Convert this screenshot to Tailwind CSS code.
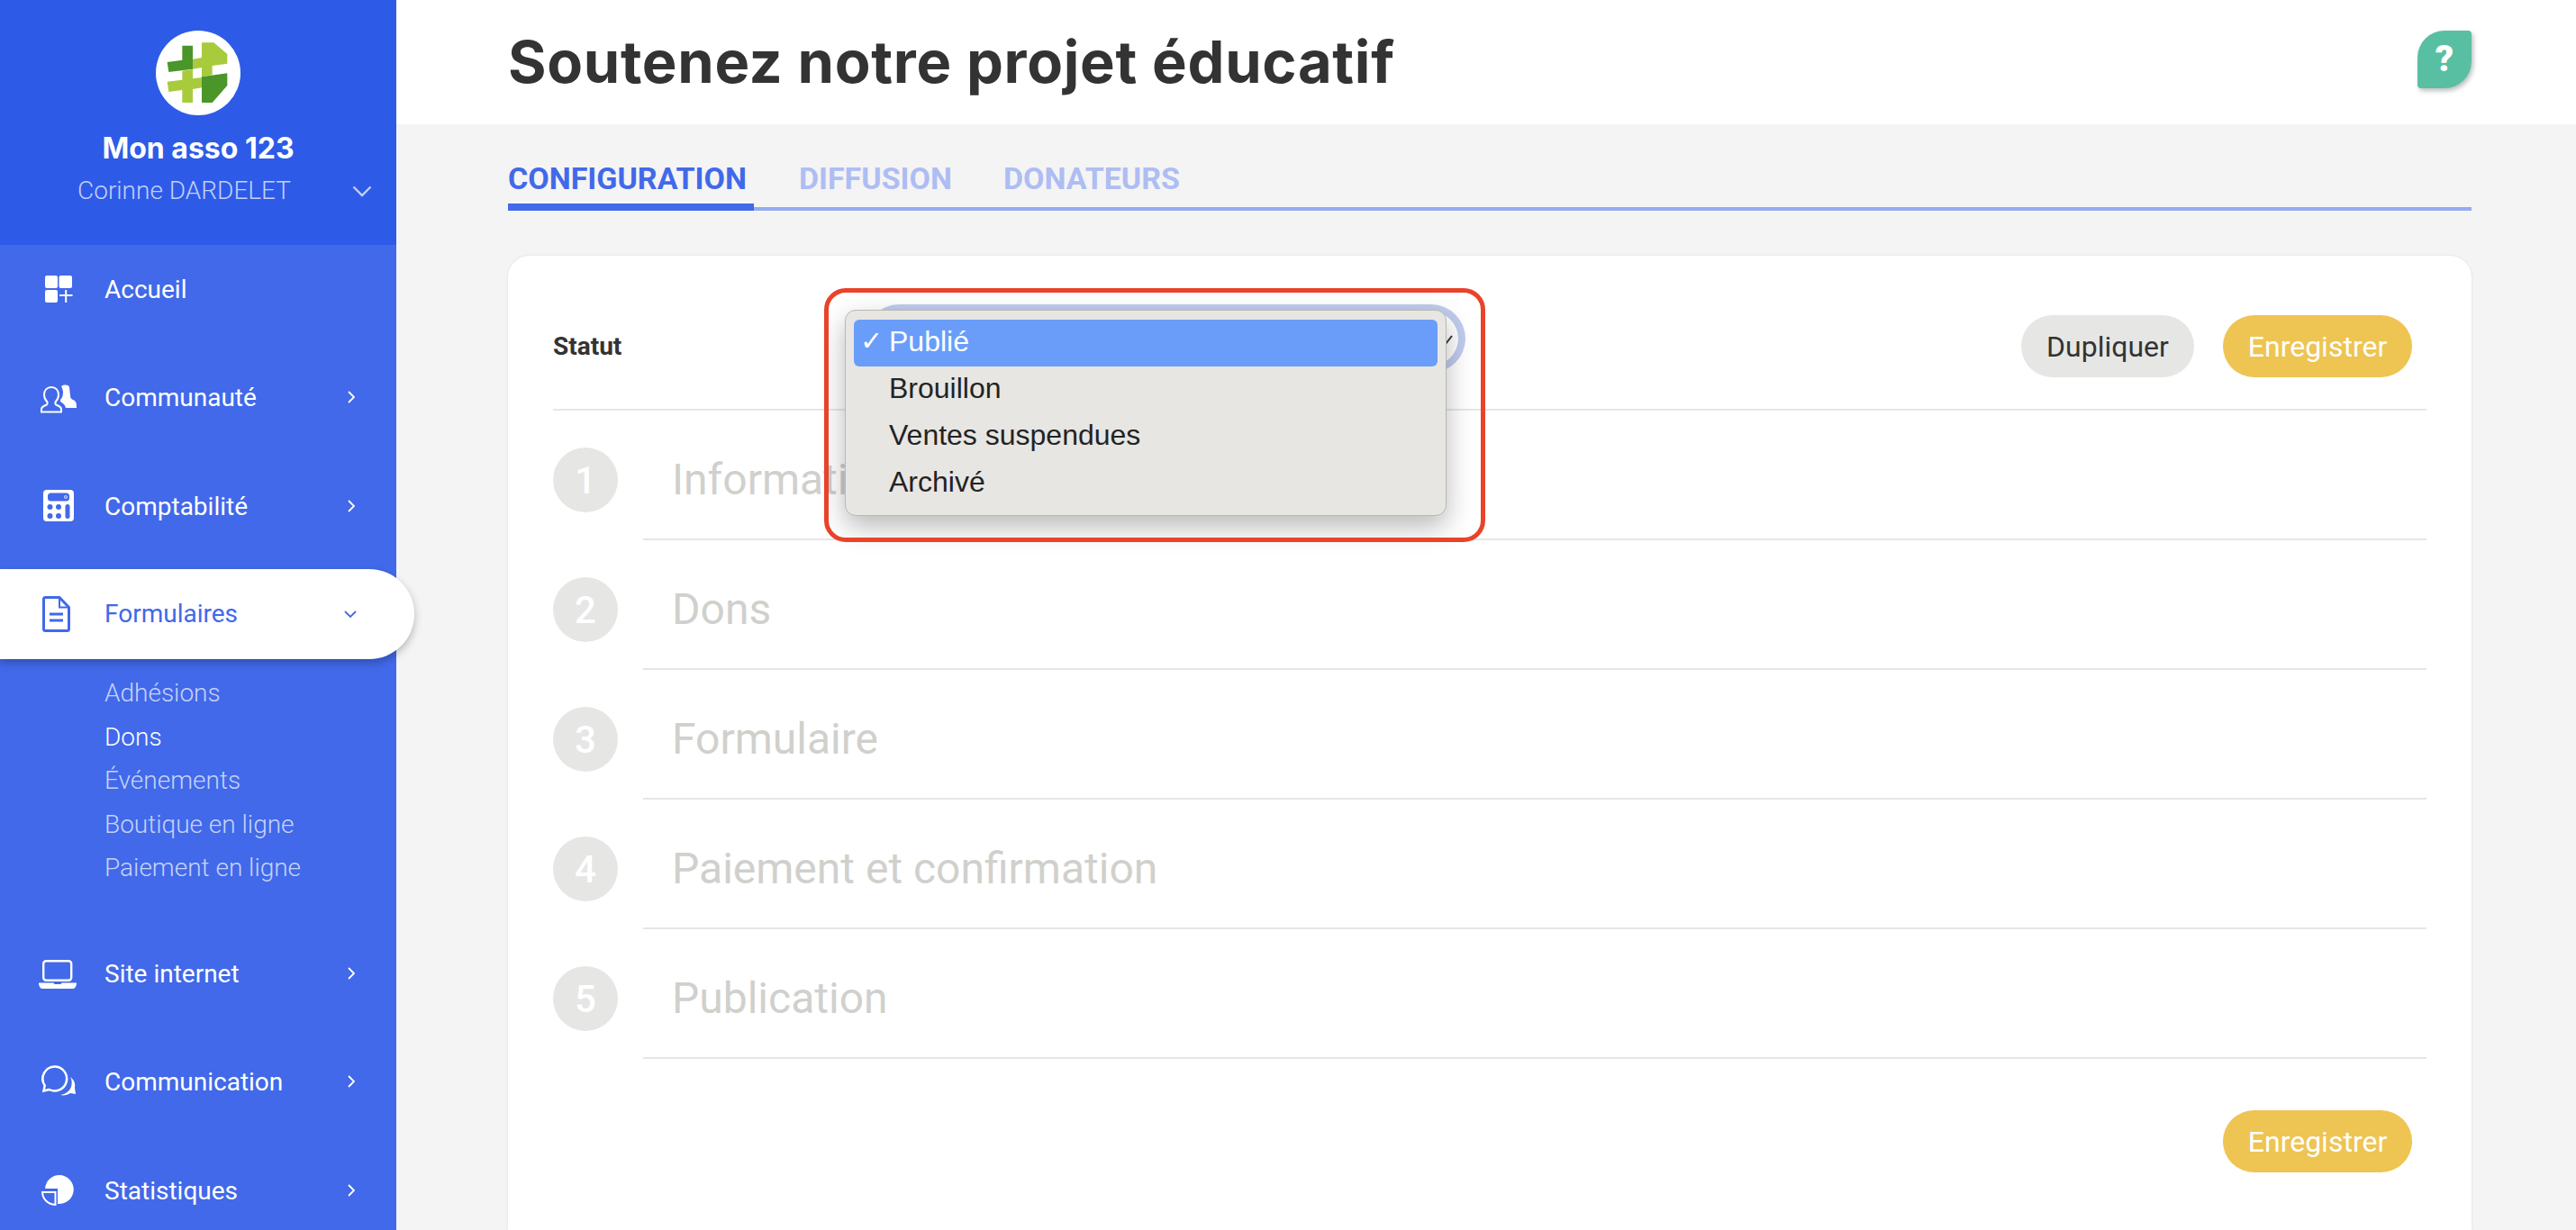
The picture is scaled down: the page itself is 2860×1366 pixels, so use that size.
<!DOCTYPE html>
<html lang="fr">
  <head>
    <meta charset="UTF-8" />
    <title>Soutenez notre projet éducatif</title>
    <script src="https://cdn.jsdelivr.net/npm/@tailwindcss/browser@4"></script>
  </head>
  <body class="flex h-screen overflow-hidden bg-[#f4f4f4] font-[Roboto,sans-serif]">
    <!-- Sidebar -->
    <aside class="w-[440px] shrink-0 bg-[#4169e9] relative z-10">
      <div class="h-[272px] bg-[#2d5be8] flex flex-col items-center pt-[34px]">
        <svg class="w-[94px] h-[94px]" viewBox="519 102 282 282">
          <circle cx="660" cy="243" r="141" fill="#fff" />
          <polygon fill="#4a9628" points="607,152 642,152 642,230 562,240 557,207 607,200" />
          <polygon fill="#a8cb3c" points="642,197 672,192 672,142 712,142 757,180 757,212 707,219 707,250 672,256 672,225 642,230" />
          <polygon fill="#a8cb3c" points="607,236 642,231 642,262 672,258 672,292 642,297 642,342 607,342 607,300 562,306 557,272 607,266" />
          <polygon fill="#4a9628" points="672,256 757,244 757,285 707,342 672,342" />
        </svg>
        <div class="mt-[15px] text-[32px] leading-[44px] font-bold text-white font-[Inter,sans-serif]">Mon asso 123</div>
        <div class="w-full flex items-center mt-[5px] h-[40px]">
          <span class="ml-[86px] text-[28px] font-light text-[#c3cff8]">Corinne DARDELET</span>
          <svg class="ml-auto mr-[27px] w-[22px] h-[13px]" viewBox="0 0 22 13" fill="none" stroke="#c3cff8" stroke-width="2.4"><path d="M1.5 1.5 11 11l9.5-9.5" /></svg>
        </div>
      </div>

      <nav class="flex flex-col -mt-px text-white text-[28px]">
        <a class="flex items-center h-[100px] mb-[20.4px] pl-[42px] pr-[46px]">
          <svg class="w-11 h-11 mr-[30px]" viewBox="0 0 44 44" fill="#fff">
            <rect x="8" y="7" width="14" height="14" rx="2" />
            <rect x="23.5" y="7" width="14.5" height="14" rx="2" />
            <rect x="8" y="23" width="14" height="14" rx="2" />
            <path d="M24 29h14.5M31.2 23v14" stroke="#fff" stroke-width="2" fill="none" />
          </svg>
          <span class="pt-[2px]">Accueil</span>
        </a>
        <a class="flex items-center h-[100px] mb-[20.4px] pl-[42px] pr-[46px]">
          <svg class="w-11 h-11 mr-[30px]" viewBox="0 0 44 44">
            <path d="M15 11c-5 0-8 3.500-8 8.500 0 3.500 1.500 6 3.500 8v2.500c0 1-6 1.500-6.500 5v3.500h22v-3.500c-.5-3.500-6.500-4-6.500-5v-2.500c2-2 3.500-4.500 3.500-8 0-5-3-8.500-8-8.500z" fill="none" stroke="#fff" stroke-width="2" />
            <path d="M26 10c3-2 8-2 9 1l1 9c0 3 1 4 3 5 3 1 4 3 4 8v1H31c-1-4-4-6-6-7v-2c2-2 3-5 3-8 0-3-1-5-2-7z" fill="#fff" />
          </svg>
          <span class="pt-[2px]">Communauté</span>
          <svg class="ml-auto w-2 h-[14px]" viewBox="0 0 8 14" fill="none" stroke="#fff" stroke-width="1.800"><path d="m1 1 6 6-6 6" /></svg>
        </a>
        <a class="flex items-center h-[100px] mb-[20.4px] pl-[42px] pr-[46px]">
          <svg class="w-11 h-11 mr-[30px]" viewBox="0 0 44 44">
            <rect x="6" y="4" width="34" height="35" rx="4" fill="#fff" />
            <rect x="11" y="7.500" width="24" height="9" rx="3.500" fill="#4169e9" />
            <circle cx="31" cy="12" r="1.500" fill="none" stroke="#fff" stroke-width=".8" />
            <circle cx="13.500" cy="23" r="3" fill="#4169e9" />
            <circle cx="23" cy="23" r="3" fill="#4169e9" />
            <circle cx="13.500" cy="33" r="3" fill="#4169e9" />
            <circle cx="23" cy="33" r="3" fill="#4169e9" />
            <rect x="30.500" y="20" width="5" height="16" rx="2.500" fill="#4169e9" />
          </svg>
          <span class="pt-[2px]">Comptabilité</span>
          <svg class="ml-auto w-2 h-[14px]" viewBox="0 0 8 14" fill="none" stroke="#fff" stroke-width="1.800"><path d="m1 1 6 6-6 6" /></svg>
        </a>
        <a class="flex items-center h-[100px] w-[460px] pl-[42px] pr-[64px] bg-white text-[#4169e9] rounded-r-full shadow-[0_4px_10px_rgba(0,0,0,0.25)]">
          <svg class="w-11 h-11 mr-[30px]" viewBox="0 0 44 44" fill="none" stroke="#4169e9">
            <path d="M8.500 3.500h15.500l10.500 11v24a2 2 0 0 1-2 2H8.500a2 2 0 0 1-2-2v-33a2 2 0 0 1 2-2z" stroke-width="3" />
            <path d="M24 4v10.500h10.500" stroke-width="2" />
            <path d="M13 22h15M13 29h15" stroke-width="3" />
          </svg>
          Formulaires
          <svg class="ml-auto w-[14px] h-2" viewBox="0 0 14 8" fill="none" stroke="#4169e9" stroke-width="1.800"><path d="m1 1 6 6 6-6" /></svg>
        </a>
        <div class="pt-[14px] pb-[42.300px] pl-[116px] text-[28px] font-light text-[#c6d2f8] leading-[48.500px]">
          <div>Adhésions</div>
          <div class="text-white">Dons</div>
          <div>Événements</div>
          <div>Boutique en ligne</div>
          <div>Paiement en ligne</div>
        </div>
        <a class="flex items-center h-[100px] mb-[20.4px] pl-[42px] pr-[46px]">
          <svg class="w-11 h-11 mr-[30px]" viewBox="0 0 44 44" fill="#fff">
            <rect x="6.200" y="8.200" width="31" height="21.500" rx="3" fill="none" stroke="#fff" stroke-width="2.400" />
            <path d="M1 32.500h16.500l1 1.500h7l1-1.500H43c0 4-2 6.500-4 6.500H5c-2 0-4-2.500-4-6.500z" />
          </svg>
          <span class="pt-[2px]">Site internet</span>
          <svg class="ml-auto w-2 h-[14px]" viewBox="0 0 8 14" fill="none" stroke="#fff" stroke-width="1.800"><path d="m1 1 6 6-6 6" /></svg>
        </a>
        <a class="flex items-center h-[100px] mb-[20.4px] pl-[42px] pr-[46px]">
          <svg class="w-11 h-11 mr-[30px]" viewBox="0 0 44 44">
            <path d="M19.500 5.500a13.500 13.500 0 1 1-7 25.500l-6 1.500 1.200-6A13.500 13.500 0 0 1 19.500 5.500z" fill="none" stroke="#fff" stroke-width="2.500" />
            <path d="M36 17c4 3 6 7 5 12l1 7-6-1c-3 2-7 3-11 2 6-1 10-4 12-9 1-4 1-8-1-11z" fill="#fff" />
          </svg>
          <span class="pt-[2px]">Communication</span>
          <svg class="ml-auto w-2 h-[14px]" viewBox="0 0 8 14" fill="none" stroke="#fff" stroke-width="1.800"><path d="m1 1 6 6-6 6" /></svg>
        </a>
        <a class="flex items-center h-[100px] pl-[42px] pr-[46px]">
          <svg class="w-11 h-11 mr-[30px]" viewBox="0 0 44 44">
            <path d="M24 5a16 16 0 1 1-2 31.900V20H8.100A16 16 0 0 1 24 5z" fill="#fff" />
            <path d="M5 24h14.500v14C11 37.500 5.500 32 5 24z" fill="none" stroke="#fff" stroke-width="2" />
          </svg>
          <span class="pt-[2px]">Statistiques</span>
          <svg class="ml-auto w-2 h-[14px]" viewBox="0 0 8 14" fill="none" stroke="#fff" stroke-width="1.800"><path d="m1 1 6 6-6 6" /></svg>
        </a>
      </nav>
    </aside>

    <!-- Main -->
    <main class="flex-1 min-w-0 flex flex-col">
      <header class="h-[138px] shrink-0 bg-white flex items-center justify-between pl-[124px] pr-[116px]">
        <h1 class="text-[65px] tracking-[0.7px] font-bold text-[#333] font-[Inter,sans-serif]">Soutenez notre projet éducatif</h1>
        <button class="w-[60px] h-[64px] mb-[6px] bg-[#58bfa2] rounded-tl-[30px] rounded-br-[30px] rounded-tr-[4px] rounded-bl-[4px] shadow-[2px_3px_5px_rgba(0,0,0,0.25)] text-white text-[40px] font-black leading-none">?</button>
      </header>

      <div class="flex-1 flex flex-col ml-[124px] mr-[116px] pt-[40px]">
        <!-- Tabs -->
        <div class="flex gap-[50px] border-b-4 border-[#94aaf0] text-[34px] font-bold leading-[40px] text-[#aebdf3]">
          <div class="pr-[8px] pb-[8px] -mb-[4px] border-b-8 border-[#4169e9] text-[#4169e9]">CONFIGURATION</div>
          <div>DIFFUSION</div>
          <div class="ml-[7px]">DONATEURS</div>
        </div>

        <!-- Card -->
        <section class="flex-1 mt-[50px] bg-white rounded-t-[24px] shadow-[0_0_3px_rgba(0,0,0,0.1)] px-[50px]">
          <div class="flex items-center pt-[66px] pb-[35px] border-b-2 border-[#e6e6e5]">
            <span class="w-[354px] text-[28px] font-bold text-[#333]">Statut</span>
            <div class="relative w-[651px] h-[60px] -mt-[18px] bg-white rounded-full ring-8 ring-[#c0ccee]">
              <svg class="absolute right-[5px] top-[24px] w-[10px] h-[14px]" viewBox="0 0 10 14" fill="none" stroke="#333" stroke-width="2"><path d="M1 12 8 3" /></svg>
              <!-- Open select menu -->
              <div class="absolute left-[-30px] top-[-2px] w-[668px] h-[229px] z-20 bg-[#e7e6e3] rounded-[12px] border border-[#b9b8b5] px-[9px] pt-[10px] shadow-[0_12px_30px_rgba(0,0,0,0.28)] text-[32px] leading-[48px] text-[#232323] font-['Liberation_Sans',sans-serif]">
                <div class="relative h-[52px] pl-[39px] bg-[#699df9] rounded-[6px] text-white">
                  <span class="absolute left-[7px] text-[30px]">✓</span>Publié
                </div>
                <div class="h-[52px] pl-[39px]">Brouillon</div>
                <div class="h-[52px] pl-[39px]">Ventes suspendues</div>
                <div class="h-[52px] pl-[39px]">Archivé</div>
              </div>
              <!-- Red annotation frame -->
              <div class="absolute left-[-53px] top-[-26px] w-[734px] h-[282px] z-30 border-[5px] border-[#e9432a] rounded-[24px]"></div>
            </div>
            <button class="ml-auto w-[192px] h-[69px] rounded-full bg-[#e6e6e5] text-[32px] text-[#333]">Dupliquer</button>
            <button class="ml-[32px] w-[210px] h-[69px] mr-[16px] rounded-full bg-[#eec453] text-[32px] text-white">Enregistrer</button>
          </div>

          <!-- Steps -->
          <div class="flex h-[144px]">
            <div class="w-[72px] h-[72px] mt-[41px] shrink-0 rounded-full bg-[#e6e6e5] flex items-center justify-center text-white text-[42px] font-medium">1</div>
            <div class="flex-1 ml-[28px] pl-[32px] pt-[41px] border-b-2 border-[#e6e6e5] text-[48px] leading-[72px] text-[#d0d0cc]">Information</div>
          </div>
          <div class="flex h-[144px]">
            <div class="w-[72px] h-[72px] mt-[41px] shrink-0 rounded-full bg-[#e6e6e5] flex items-center justify-center text-white text-[42px] font-medium">2</div>
            <div class="flex-1 ml-[28px] pl-[32px] pt-[41px] border-b-2 border-[#e6e6e5] text-[48px] leading-[72px] text-[#d0d0cc]">Dons</div>
          </div>
          <div class="flex h-[144px]">
            <div class="w-[72px] h-[72px] mt-[41px] shrink-0 rounded-full bg-[#e6e6e5] flex items-center justify-center text-white text-[42px] font-medium">3</div>
            <div class="flex-1 ml-[28px] pl-[32px] pt-[41px] border-b-2 border-[#e6e6e5] text-[48px] leading-[72px] text-[#d0d0cc]">Formulaire</div>
          </div>
          <div class="flex h-[144px]">
            <div class="w-[72px] h-[72px] mt-[41px] shrink-0 rounded-full bg-[#e6e6e5] flex items-center justify-center text-white text-[42px] font-medium">4</div>
            <div class="flex-1 ml-[28px] pl-[32px] pt-[41px] border-b-2 border-[#e6e6e5] text-[48px] leading-[72px] text-[#d0d0cc]">Paiement et confirmation</div>
          </div>
          <div class="flex h-[144px]">
            <div class="w-[72px] h-[72px] mt-[41px] shrink-0 rounded-full bg-[#e6e6e5] flex items-center justify-center text-white text-[42px] font-medium">5</div>
            <div class="flex-1 ml-[28px] pl-[32px] pt-[41px] border-b-2 border-[#e6e6e5] text-[48px] leading-[72px] text-[#d0d0cc]">Publication</div>
          </div>

          <div class="flex justify-end mt-[57px] pr-[16px]">
            <button class="w-[210px] h-[69px] rounded-full bg-[#eec453] text-[32px] text-white">Enregistrer</button>
          </div>
        </section>
      </div>
    </main>
  </body>
</html>
